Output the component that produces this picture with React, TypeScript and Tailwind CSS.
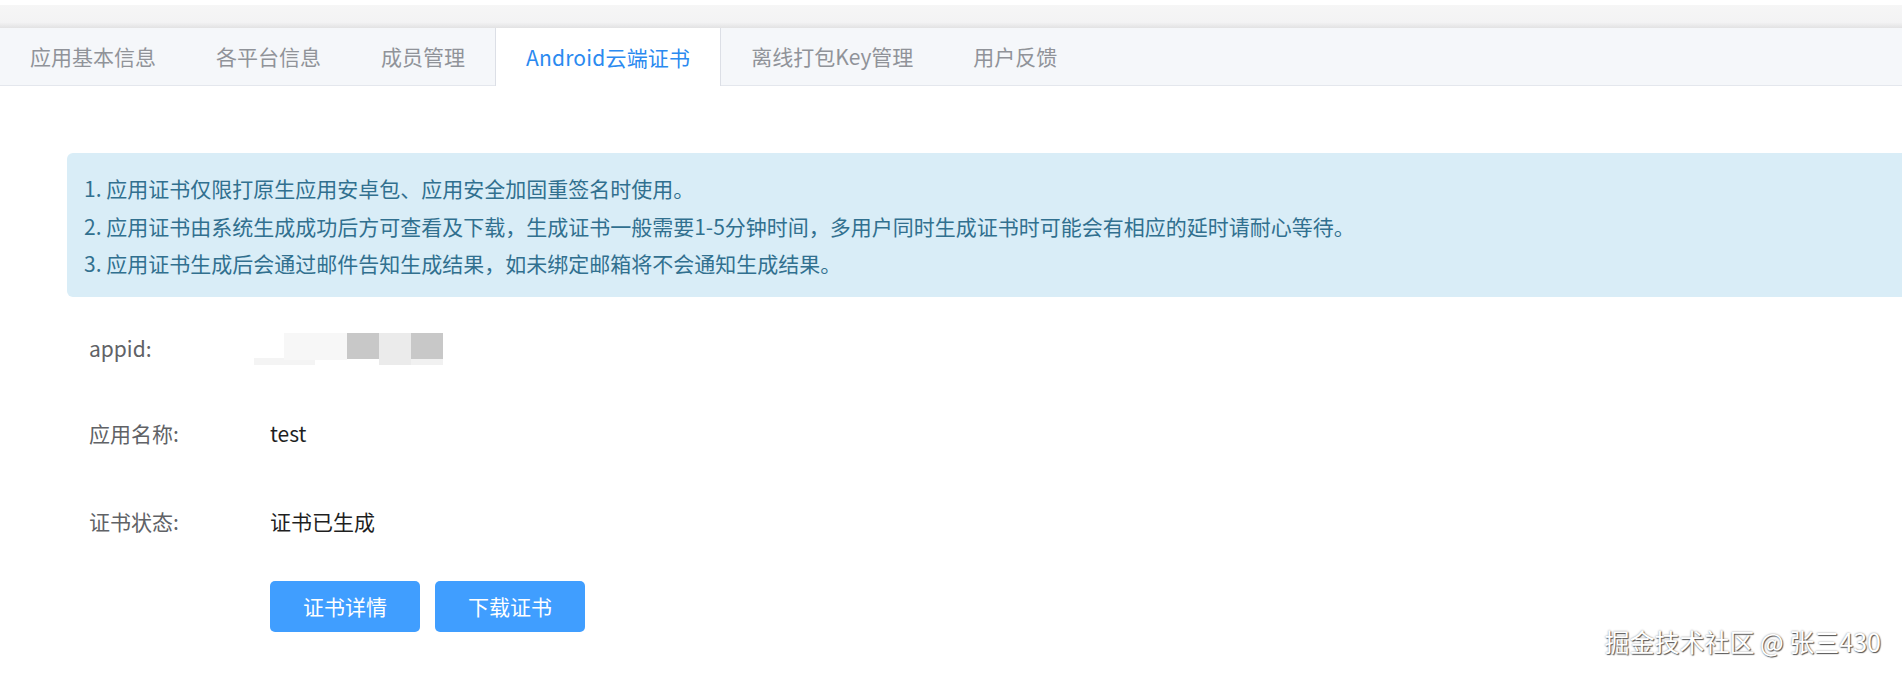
import { ReactNode } from 'react'

const tabs = ['应用基本信息', '各平台信息', '成员管理', 'Android云端证书', '离线打包Key管理', '用户反馈']
const activeTab = 3

const notices = [
  '1. 应用证书仅限打原生应用安卓包、应用安全加固重签名时使用。',
  '2. 应用证书由系统生成成功后方可查看及下载，生成证书一般需要1-5分钟时间，多用户同时生成证书时可能会有相应的延时请耐心等待。',
  '3. 应用证书生成后会通过邮件告知生成结果，如未绑定邮箱将不会通知生成结果。',
]

function Mosaic() {
  // blurred-out appid
  return (
    <svg width="190" height="33" viewBox="0 0 190 33" className="block">
      <rect x="0" y="25" width="61" height="7" fill="#f4f4f4" />
      <rect x="30" y="0" width="63" height="27" fill="#f7f7f7" />
      <rect x="93" y="0" width="32" height="26" fill="#c8c8c8" />
      <rect x="125" y="0" width="32" height="32" fill="#ebebeb" />
      <rect x="157" y="0" width="32" height="26" fill="#c8c8c8" />
      <rect x="157" y="26" width="32" height="6" fill="#f1f1f1" />
    </svg>
  )
}

function FormRow({ label, children, className = '' }: { label: string; children: ReactNode; className?: string }) {
  return (
    <div className={`flex items-center h-[40px] ${className}`}>
      <div className="w-[181px] shrink-0 text-[#606266]">{label}</div>
      <div className="text-[#1f1f1f]">{children}</div>
    </div>
  )
}

export default function App() {
  return (
    <div className="relative w-[1902px] h-[679px] overflow-hidden bg-white text-[21px] font-['Noto_Sans_CJK_SC','Noto_Sans',sans-serif]">
      {/* header shadow strip */}
      <div className="h-[5px] bg-white" />
      <div className="h-[23px] bg-[linear-gradient(to_bottom,#f6f6f6_0%,#f3f3f4_75%,#e2e2e3_100%)]" />

      {/* tabs */}
      <div className="flex h-[58px] bg-[#f5f7fa] border-b border-[#e4e7ed]">
        {tabs.map((t, i) => (
          <div
            key={t}
            className={`flex items-center px-[30px] leading-none ${
              i === activeTab
                ? 'bg-white text-[#2b8af0] border-x border-[#dcdfe6] h-[58px] -mb-px tracking-[0.2px]'
                : 'text-[#909399]'
            }`}
          >
            {t}
          </div>
        ))}
      </div>

      <div className="pl-[67px] pt-[67px]">
        {/* notice */}
        <div className="bg-[#d9edf7] rounded-l-[6px] h-[144px] pl-[17px] pt-[17px] text-[#31708f] leading-[37.5px]">
          {notices.map(n => (
            <p key={n}>{n}</p>
          ))}
        </div>

        <div className="pl-[22px] pt-[32px]">
          <FormRow label="appid:" className="mb-[45px]">
            <div className="-ml-[16px]">
              <Mosaic />
            </div>
          </FormRow>
          <FormRow label="应用名称:" className="mb-[48px]">test</FormRow>
          <FormRow label="证书状态:">证书已生成</FormRow>

          <div className="flex gap-[15px] ml-[181px] mt-[39px]">
            <button className="w-[150px] h-[51px] rounded-[5px] bg-[#409eff] text-white">证书详情</button>
            <button className="w-[150px] h-[51px] rounded-[5px] bg-[#409eff] text-white">下载证书</button>
          </div>
        </div>
      </div>

      {/* watermark */}
      <div className="absolute right-[21px] top-[625px] text-[25px] leading-[32px] text-white [text-shadow:1px_1px_1px_#555,0_0_2px_rgba(0,0,0,0.45)]">
        掘金技术社区 @ 张三430
      </div>
    </div>
  )
}
